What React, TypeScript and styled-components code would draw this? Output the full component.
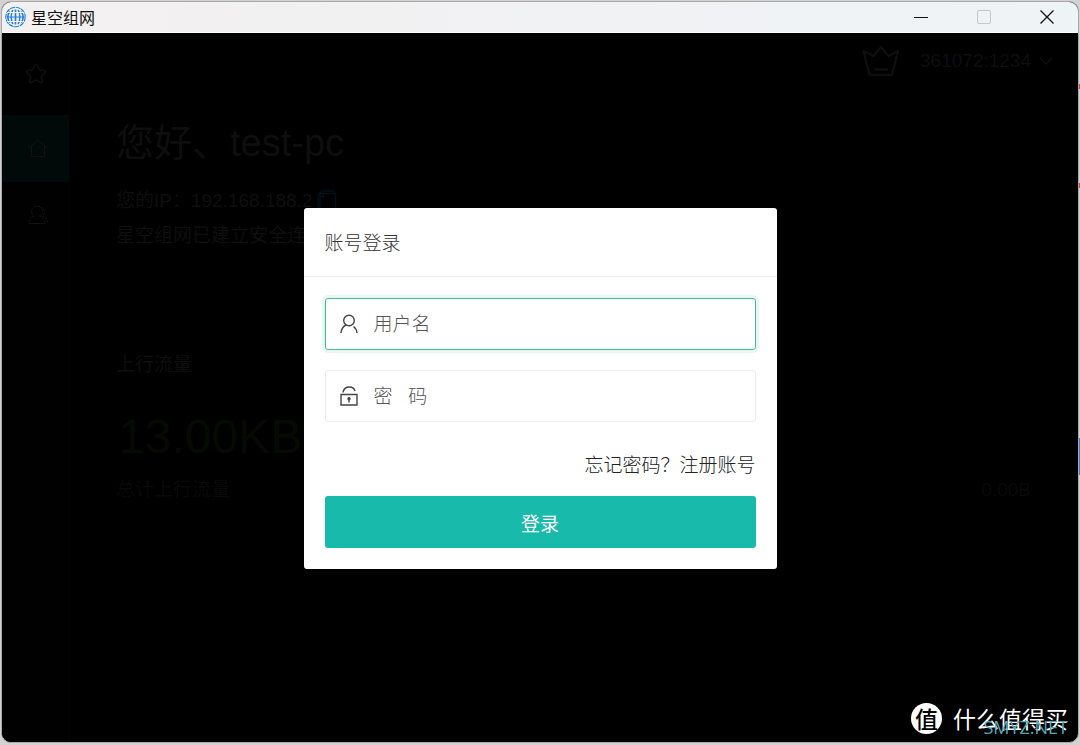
import React from 'react';
import styled, { createGlobalStyle } from 'styled-components';

const sans = `'Liberation Sans', 'Noto Sans CJK SC', sans-serif`;

const GlobalStyle = createGlobalStyle`
  * { box-sizing: border-box; }
  body { margin: 0; font-family: ${sans}; font-size: 19px; }
  button, input { font: inherit; color: inherit; }
  h1, h2, p, dl, dd { margin: 0; font-weight: inherit; font-size: inherit; }
`;

const Desktop = styled.div`
  display: flex;
  min-height: 100vh;
  padding: 1px 1px 2px;
  background:
    linear-gradient(
      #d2d2d2 84px, #d0483f 84px 89px, #d2d2d2 89px 183px, #d0483f 183px 188px,
      #d2d2d2 188px 438px, #3f7fd0 438px 475px, #d2d2d2 475px
    ) right / 2px 100% no-repeat,
    #d2d2d2;
`;

const Window = styled.div`
  position: relative;
  flex: 1;
  display: flex;
  flex-direction: column;
  overflow: hidden;
  border: 1px solid #a9a9a9;
  border-radius: 10px;
  background: #000;
`;

const TitleBar = styled.header`
  display: flex;
  align-items: center;
  gap: 5px;
  height: 31px;
  padding: 0 3px;
  border-bottom: 1px solid #fff;
  background: linear-gradient(90deg, #f3f0f0, #eef3f6);
  color: #111;
`;

const AppName = styled.span`
  flex: 1;
  font-family: 'Noto Sans CJK SC', sans-serif;
  font-size: 16px;
  line-height: 24px;
`;

const WindowButton = styled.button<{ $dim?: boolean }>`
  display: grid;
  place-items: center;
  width: 57px;
  height: 28px;
  padding: 0;
  border: 0;
  background: none;
  color: ${p => (p.$dim ? '#c3c7c9' : '#111')};
`;

const WindowButtons = styled.div`
  display: flex;
  gap: 6px;
`;

const Content = styled.div`
  flex: 1;
  display: flex;
  color: #0e0e0e;
`;

const Sidebar = styled.nav`
  width: 68px;
  border-right: 1px solid #030303;
  background: #010101;
`;

const Brand = styled.div`
  display: grid;
  place-items: center;
  height: 82px;
`;

const NavItem = styled.button<{ $active?: boolean }>`
  display: grid;
  place-items: center;
  width: 100%;
  height: 67px;
  padding: 0 0 2px 4px;
  border: 0;
  background: ${p => (p.$active ? '#010a09' : 'none')};
  color: #0e1211;
`;

const Main = styled.main`
  flex: 1;
  display: flex;
  flex-direction: column;
`;

const TopBar = styled.div`
  display: flex;
  align-items: center;
  justify-content: flex-end;
  height: 56px;
  padding-right: 25px;
`;

const Account = styled.button`
  display: flex;
  align-items: center;
  gap: 8px;
  margin-left: 20px;
  padding: 0;
  border: 0;
  background: none;
  line-height: 28px;
`;

const Dashboard = styled.div`
  padding: 26px 47px 26px 46px;
`;

const Greeting = styled.h1`
  margin-bottom: 12px;
  font-size: 38px;
  line-height: 56px;
`;

const InfoLine = styled.p`
  display: flex;
  align-items: center;
  gap: 5px;
  height: 35px;
  line-height: 35px;
`;

const Traffic = styled.section`
  margin-top: 98px;
`;

const StatLabel = styled.h2`
  line-height: 28px;
`;

const StatValue = styled.p`
  margin: 30px 0 11px;
  padding-left: 2px;
  color: #050b02;
  font-size: 48px;
  line-height: 56px;
`;

const Total = styled.dl`
  display: flex;
  justify-content: space-between;
  color: #090909;
  line-height: 28px;
`;

const Backdrop = styled.div`
  position: absolute;
  inset: 32px 0 0;
  display: grid;
  place-items: center;
`;

const Dialog = styled.form`
  width: 473px;
  max-width: 100%;
  border-radius: 3px;
  background: #fff;
  color: #333;
  font-weight: 300;
`;

const DialogTitle = styled.h2`
  padding: 22px 21px 18px;
  border-bottom: 1px solid #ececec;
  line-height: 28px;
`;

const DialogBody = styled.div`
  display: flex;
  flex-direction: column;
  padding: 21px;
`;

const Field = styled.label<{ $focused?: boolean }>`
  display: flex;
  align-items: center;
  gap: 15px;
  height: 52px;
  margin-bottom: 20px;
  padding: 0 14px;
  border: 1px solid ${p => (p.$focused ? '#3fbf8c' : '#ededed')};
  border-radius: 3px;
  box-shadow: ${p => (p.$focused ? '0 0 0 3px #e9f7f2' : 'none')};
  color: #444;
`;

const TextInput = styled.input`
  flex: 1;
  min-width: 0;
  padding: 2px 0 0;
  border: 0;
  outline: 0;
  background: none;
  line-height: 28px;
  &::placeholder { color: #555; opacity: 1; }
`;

const Links = styled.div`
  display: flex;
  justify-content: flex-end;
  margin: 10px 0 16px;
  line-height: 28px;
`;

const TextLink = styled.a`
  color: #222;
  text-decoration: none;
`;

const Submit = styled.button`
  height: 52px;
  padding: 2px 0 0;
  border: 0;
  border-radius: 3px;
  background: #17baab;
  color: #fff;
  font-weight: 400;
`;

const Watermark = styled.div`
  position: absolute;
  right: 10px;
  bottom: 8px;
  display: flex;
  align-items: center;
  gap: 11px;
  color: #fff;
  font-family: 'Noto Sans CJK SC', sans-serif;
  font-size: 23px;
  line-height: 32px;
`;

const Seal = styled.span`
  display: grid;
  place-items: center;
  width: 31px;
  height: 31px;
  border-radius: 50%;
  background: #fff;
  color: #000;
  font-weight: 500;
  line-height: 28px;
`;

const Site = styled.span`
  position: absolute;
  right: 0;
  bottom: -3px;
  color: #55a9bb;
  font-family: 'Open Sans', sans-serif;
  font-size: 18px;
  line-height: 20px;
`;

const Svg = ({ w, h = w, sw = 1, children }: { w: number; h?: number; sw?: number; children: React.ReactNode }) => (
  <svg width={w} height={h} viewBox={`0 0 ${w} ${h}`} fill="none" stroke="currentColor" strokeWidth={sw} aria-hidden="true">
    {children}
  </svg>
);

const Globe = () => (
  <svg width="21" height="22" viewBox="0 0 21 22" fill="none" stroke="#1f7fe0" aria-hidden="true">
    <circle cx="10.500" cy="11" r="9.700" strokeWidth="1.1" strokeDasharray="5 .7" />
    <path d="M7.800 4C5.800 8 5.800 14 7.800 18M13.200 4C15.200 8 15.200 14 13.200 18M10.500 3.500v15M4.800 5.500C2.300 9 2.300 13 4.800 16.500M16.200 5.500C18.700 9 18.700 13 16.200 16.500" strokeWidth="1.600" />
    <path d="M2 6.500h17M2 15.500h17" stroke="#f2f4f8" strokeWidth="1" />
    <path d="M1.500 11h18" strokeWidth="1" />
  </svg>
);

export default function App() {
  return (
    <Desktop>
      <GlobalStyle />
      <Window>
        <TitleBar>
          <Globe />
          <AppName>星空组网</AppName>
          <WindowButtons>
            <WindowButton type="button" aria-label="最小化">
              <Svg w={14}><path d="M0 7.500h14" /></Svg>
            </WindowButton>
            <WindowButton type="button" aria-label="最大化" $dim>
              <Svg w={14}><rect x=".5" y=".5" width="13" height="13" rx="1.5" /></Svg>
            </WindowButton>
            <WindowButton type="button" aria-label="关闭">
              <Svg w={14} sw={1.3}><path d="M.5.5l13 13M13.500.5l-13 13" /></Svg>
            </WindowButton>
          </WindowButtons>
        </TitleBar>

        <Content>
          <Sidebar>
            <Brand>
              <Svg w={22} sw={1.5}>
                <path d="M11 1.200q.7 0 1 .6l2.500 5 5.500.8q1.400.4.5 1.500l-4 4 1 5.600q0 1.500-1.500 1l-5-2.700-5 2.700q-1.500.5-1.500-1l1-5.600-4-4q-.9-1.100.5-1.500l5.500-.8 2.500-5q.3-.6 1-.6z" strokeLinejoin="round" />
              </Svg>
            </Brand>
            <NavItem type="button" aria-label="主页" $active>
              <Svg w={20} h={18}><path d="M.5 9L10 1l9.500 8M3.500 7v10.500h13V7" /></Svg>
            </NavItem>
            <NavItem type="button" aria-label="用户">
              <Svg w={20}>
                <path d="M6.500 11C1.500 8.500 3.500 1 9 1s7.500 7.500 2.500 10c3.500 1 5.500 3.500 5.500 7.500H.8c0-4 2-6.500 5.700-7.500zM13 2.500c4 1 4.500 6.500 1.500 8.500 3 1 5 3 5 6" />
              </Svg>
            </NavItem>
          </Sidebar>

          <Main>
            <TopBar>
              <Svg w={38} h={32} sw={2.4}>
                <path d="M1.500 6l6 24h22.500l6-24-9.500 5L19 2l-7.500 9zM12.500 24.500h13.500" strokeLinejoin="round" />
              </Svg>
              <Account type="button">
                361072:1234
                <Svg w={14} h={8} sw={1.3}><path d="M1 1l6 6 6-6" /></Svg>
              </Account>
            </TopBar>
            <Dashboard>
              <Greeting>您好、test-pc</Greeting>
              <InfoLine>
                您的IP：192.168.188.2
                <svg width="20" height="22" viewBox="0 0 20 22" fill="none" stroke="#01101a" strokeWidth="1.3" aria-hidden="true">
                  <path d="M3 3.500h15.500v17.500H3zM1 19V5l4-4h11l2.500 2.500M6.500 3.500V7H3" />
                </svg>
              </InfoLine>
              <InfoLine>星空组网已建立安全连接</InfoLine>
              <Traffic>
                <StatLabel>上行流量</StatLabel>
                <StatValue>13.00KB</StatValue>
                <Total>
                  <dt>总计上行流量</dt>
                  <dd>0.00B</dd>
                </Total>
              </Traffic>
            </Dashboard>
          </Main>
        </Content>

        <Backdrop>
          <Dialog role="dialog" aria-labelledby="login-title" onSubmit={e => e.preventDefault()}>
            <DialogTitle id="login-title">账号登录</DialogTitle>
            <DialogBody>
              <Field $focused>
                <Svg w={19} h={20} sw={1.4}>
                  <circle cx="9" cy="6.500" r="5.300" />
                  <path d="M6 11C3 12.500 1.200 15 1 19M13.500 12.500c2 1.500 3.200 3.500 3.500 6.500" />
                </Svg>
                <TextInput type="text" aria-label="用户名" placeholder="用户名" />
              </Field>
              <Field>
                <Svg w={19} h={20} sw={1.4}>
                  <path d="M1 8.500h16v10.500H1zM3 6.500C4-.5 13.500-.7 15 5M9 12v4.500" />
                  <circle cx="9" cy="12.800" r="1" fill="currentColor" />
                </Svg>
                <TextInput type="password" aria-label="密码" placeholder={'密\u00a0\u00a0\u00a0码'} />
              </Field>
              <Links>
                <TextLink href="#forgot">忘记密码？</TextLink>
                <TextLink href="#register">注册账号</TextLink>
              </Links>
              <Submit type="submit">登录</Submit>
            </DialogBody>
          </Dialog>
        </Backdrop>

        <Watermark>
          <Seal>值</Seal>
          什么值得买
          <Site>SMYZ.NET</Site>
        </Watermark>
      </Window>
    </Desktop>
  );
}
